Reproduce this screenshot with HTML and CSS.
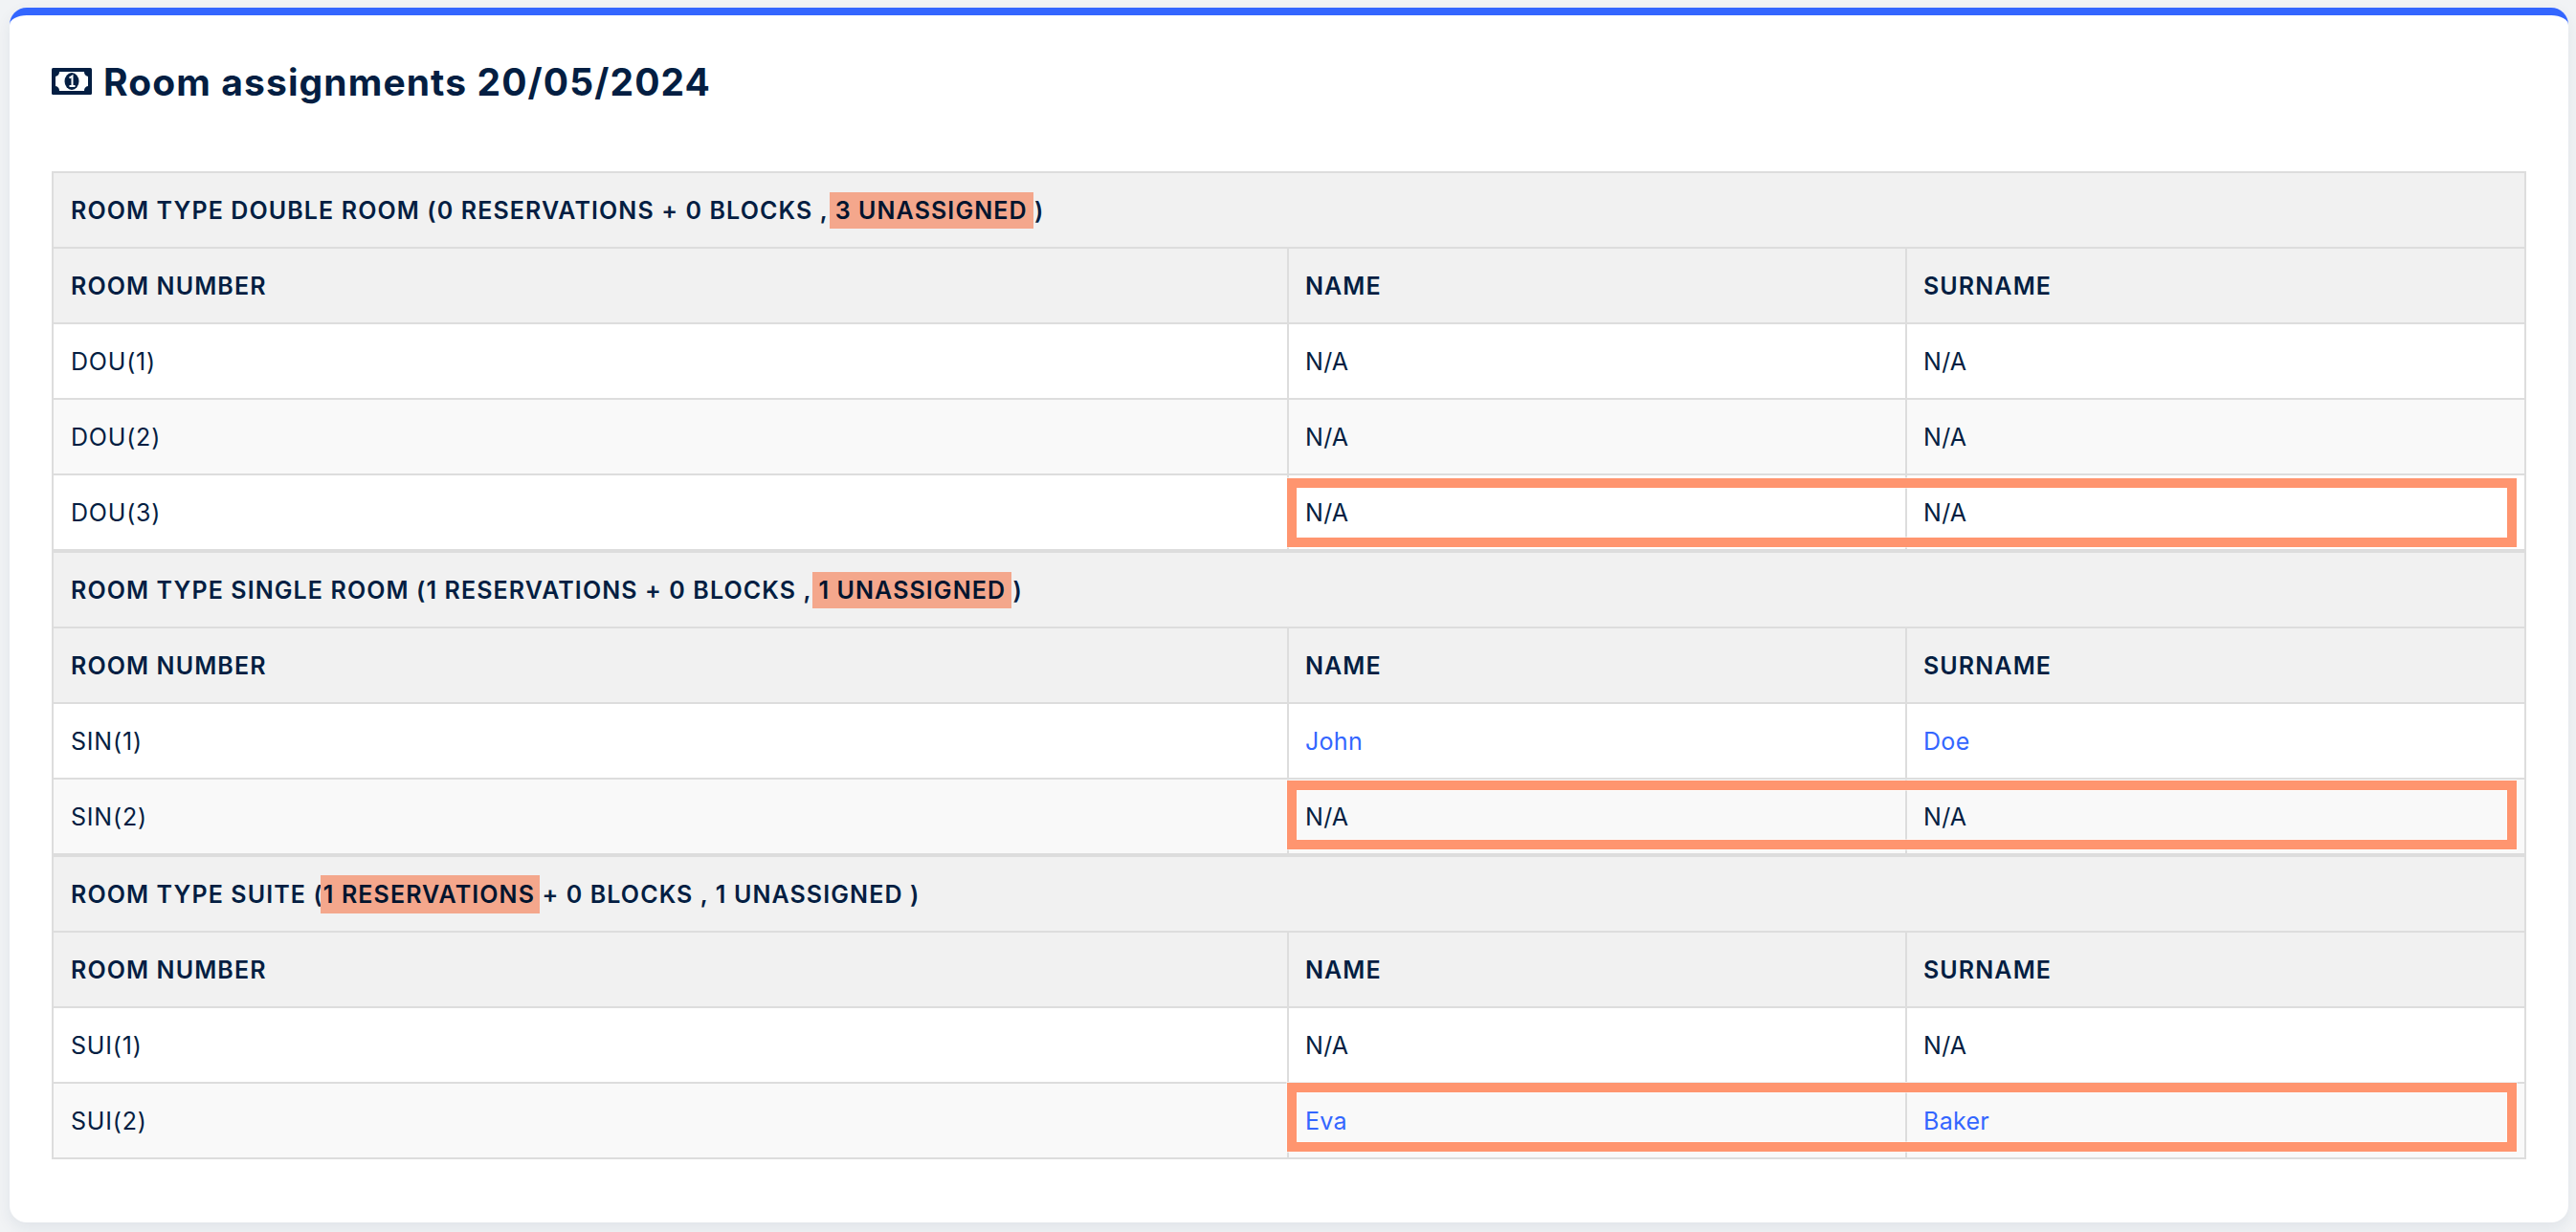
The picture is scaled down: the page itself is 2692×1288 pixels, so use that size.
FILE: index.html
```html
<!DOCTYPE html>
<html lang="en">
<head>
<meta charset="utf-8">
<title>Room assignments</title>
<link rel="stylesheet" href="styles.css">
</head>
<body>
<main class="card">
  <h1 class="title">
    <svg class="title-icon" viewBox="0 0 42 28" aria-hidden="true">
      <rect width="42" height="28" rx="1.5" fill="#041e42"/>
      <path d="M8 4H34A5 5 0 0 0 38 9V19A5 5 0 0 0 34 24H8A5 5 0 0 0 4 19V9A5 5 0 0 0 8 4Z" fill="#fff"/>
      <ellipse cx="21" cy="14" rx="7.5" ry="9" fill="#041e42"/>
      <path d="M18.5 10.5L21.5 8.5V18.5M18.5 19H24.5" fill="none" stroke="#fff" stroke-width="2"/>
    </svg>
    Room assignments 20/05/2024
  </h1>

  <table class="rooms">
    <colgroup><col class="col-room"><col class="col-name"><col class="col-surname"></colgroup>
    <thead>
      <tr><th colspan="3">ROOM TYPE DOUBLE ROOM (0 RESERVATIONS + 0 BLOCKS , <span class="mark mark-a">3 UNASSIGNED</span> )</th></tr>
      <tr><th>ROOM NUMBER</th><th>NAME</th><th>SURNAME</th></tr>
    </thead>
    <tbody>
      <tr><td>DOU(1)</td><td>N/A</td><td>N/A</td></tr>
      <tr><td>DOU(2)</td><td>N/A</td><td>N/A</td></tr>
      <tr><td>DOU(3)</td><td class="anchor">N/A<div class="callout callout-dou"></div></td><td>N/A</td></tr>
    </tbody>
  </table>

  <table class="rooms">
    <colgroup><col class="col-room"><col class="col-name"><col class="col-surname"></colgroup>
    <thead>
      <tr><th colspan="3">ROOM TYPE SINGLE ROOM (1 RESERVATIONS + 0 BLOCKS , <span class="mark mark-a">1 UNASSIGNED</span> )</th></tr>
      <tr><th>ROOM NUMBER</th><th>NAME</th><th>SURNAME</th></tr>
    </thead>
    <tbody>
      <tr><td>SIN(1)</td><td class="guest">John</td><td class="guest">Doe</td></tr>
      <tr><td>SIN(2)</td><td class="anchor">N/A<div class="callout callout-sin"></div></td><td>N/A</td></tr>
    </tbody>
  </table>

  <table class="rooms">
    <colgroup><col class="col-room"><col class="col-name"><col class="col-surname"></colgroup>
    <thead>
      <tr><th colspan="3">ROOM TYPE SUITE (<span class="mark mark-b">1 RESERVATIONS</span> + 0 BLOCKS , 1 UNASSIGNED )</th></tr>
      <tr><th>ROOM NUMBER</th><th>NAME</th><th>SURNAME</th></tr>
    </thead>
    <tbody>
      <tr><td>SUI(1)</td><td>N/A</td><td>N/A</td></tr>
      <tr><td>SUI(2)</td><td class="anchor guest">Eva<div class="callout callout-sui"></div></td><td class="guest">Baker</td></tr>
    </tbody>
  </table>
</main>
</body>
</html>
```

FILE: styles.css
```css
* { box-sizing: border-box; }

body {
  margin: 0;
  padding: 8px 8px 10px 10px;
  background: #f1f3f5;
  color: #041e42;
  font-family: "Inter", "Liberation Sans", sans-serif;
}

.card {
  height: 1270px;
  padding: 0 44px;
  background: #fff;
  border-top: 8px solid #3366ff;
  border-radius: 18px;
  box-shadow: 0 6px 16px rgba(30, 50, 90, 0.08);
}

.title {
  display: flex;
  align-items: center;
  gap: 12px;
  height: 163px;
  margin: 0;
  padding-bottom: 25px;
  font-size: 39px;
  font-weight: 700;
  letter-spacing: 1.1px;
}

.title-icon {
  flex: none;
  width: 42px;
  height: 28px;
}

.rooms {
  width: 2586px;
  border-collapse: separate;
  border-spacing: 0;
  table-layout: fixed;
  font-size: 25px;
  letter-spacing: 0.3px;
}

.col-room { width: 1291px; }
.col-name { width: 646px; }
.col-surname { width: 649px; }

.rooms th,
.rooms td {
  height: 79px;
  padding: 0 17px;
  border-top: 2px solid #dddddd;
  border-left: 2px solid #dddddd;
  text-align: left;
  vertical-align: middle;
}

.rooms th:first-child,
.rooms td:first-child {
  padding-left: 18px;
}

.rooms td:first-child {
  letter-spacing: 0.8px;
}

.rooms th:last-child,
.rooms td:last-child {
  border-right: 2px solid #dddddd;
}

.rooms tbody tr:last-child td {
  height: 81px;
  border-bottom: 2px solid #dddddd;
}

.rooms th {
  background: #f1f1f1;
  font-weight: 600;
  letter-spacing: 1.1px;
}

.rooms tbody tr:nth-child(odd) { background: #fff; }
.rooms tbody tr:nth-child(even) { background: #f9f9f9; }

.rooms td.guest { color: #3366ff; }

.mark {
  display: inline-block;
  background: #f4a78c;
  color: #00142e;
}

.mark-a {
  margin: 0 -6px;
  padding: 0 6px;
  line-height: 38px;
}

.mark-b {
  margin: 0 -5px 0 -3px;
  padding: 0 5px 0 3px;
  line-height: 40px;
}

.anchor { position: relative; }

.callout {
  position: absolute;
  left: -2px;
  width: 1285px;
  height: 72px;
  border: 10px solid #ff956f;
  box-shadow: 0 0 0 1px rgba(255, 255, 255, 0.5), inset 0 0 0 1px rgba(255, 255, 255, 0.5);
  pointer-events: none;
}

.callout-dou { top: 3px; }
.callout-sin { top: 1px; }
.callout-sui { top: -1px; }
```
